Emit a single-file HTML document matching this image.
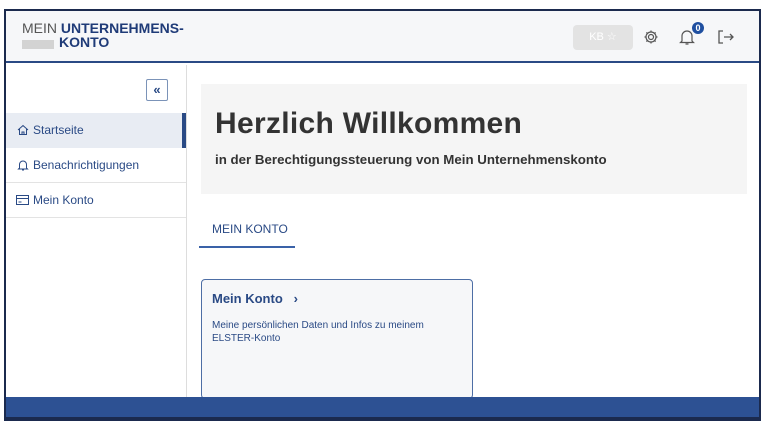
<!DOCTYPE html>
<html><head><style>
*{margin:0;padding:0;box-sizing:border-box}
body{width:764px;height:430px;background:#fff;font-family:"Liberation Sans",sans-serif;position:relative;overflow:hidden}
.a{position:absolute}
</style></head><body>
<div class="a" style="left:4px;top:9px;width:757px;height:412px;border:2px solid #1b2a4e;background:#fff"></div>
<div class="a" style="left:6px;top:11px;width:753px;height:52px;background:#f6f7f9;border-bottom:2px solid #2a4a85"></div>
<div class="a" style="left:22px;top:21px;font-size:14px;color:#555;line-height:15px">MEIN <b style="color:#1f3b78">UNTERNEHMENS-</b></div>
<div class="a" style="left:22px;top:40px;width:32px;height:9px;background:#d3d3d3"></div>
<div class="a" style="left:59px;top:35px;font-size:14px;color:#1f3b78;font-weight:bold;line-height:15px">KONTO</div>
<div class="a" style="left:573px;top:25px;width:60px;height:25px;background:#e3e3e3;border-radius:4px;color:#fff;font-size:11px;text-align:center;line-height:25px">KB ☆</div>
<svg class="a" style="left:643px;top:29px" width="16" height="16" viewBox="0 0 16 16"><circle cx="8" cy="8" r="2.5" fill="none" stroke="#555" stroke-width="1.2"/><path d="M8 1.5v2M8 12.5v2M1.5 8h2M12.5 8h2M3.4 3.4l1.4 1.4M11.2 11.2l1.4 1.4M3.4 12.6l1.4-1.4M11.2 4.8l1.4-1.4" stroke="#555" stroke-width="1.2"/><circle cx="8" cy="8" r="5" fill="none" stroke="#555" stroke-width="1.2"/></svg>
<svg class="a" style="left:679px;top:28px" width="16" height="18" viewBox="0 0 16 18"><path d="M3 13V8a5 5 0 0110 0v5l1.5 1.5h-13L3 13zM6.5 16h3" fill="none" stroke="#555" stroke-width="1.2"/></svg>
<div class="a" style="left:692px;top:22px;width:12px;height:12px;border-radius:6px;background:#1f4fa0;color:#fff;font-size:9px;font-weight:bold;text-align:center;line-height:12px">0</div>
<svg class="a" style="left:717px;top:29px" width="18" height="16" viewBox="0 0 18 16"><path d="M6 2H2v12h4M7 8h9M13 5l3 3-3 3" fill="none" stroke="#555" stroke-width="1.3"/></svg>
<div class="a" style="left:186px;top:65px;width:1px;height:332px;background:#ddd"></div>
<div class="a" style="left:146px;top:79px;width:22px;height:22px;border:1px solid #7b93b8;border-radius:2px;color:#2a4a85;font-size:13px;text-align:center;line-height:19px;font-weight:bold">«</div>
<div class="a" style="left:6px;top:113px;width:180px;height:35px;background:#e8ecf3"></div>
<div class="a" style="left:182px;top:113px;width:4px;height:35px;background:#2a4a85"></div>
<div class="a" style="left:6px;top:182px;width:180px;height:1px;background:#e3e3e3"></div>
<div class="a" style="left:6px;top:217px;width:180px;height:1px;background:#e3e3e3"></div>
<svg class="a" style="left:17px;top:124px" width="12" height="12" viewBox="0 0 12 12"><path d="M1 6L6 1.5 11 6M2.5 5v5.5h7V5M5 10.5V8h2v2.5" fill="none" stroke="#2a4a85" stroke-width="1"/></svg>
<div class="a" style="left:33px;top:123px;font-size:12px;color:#2a4a85">Startseite</div>
<svg class="a" style="left:17px;top:159px" width="12" height="12" viewBox="0 0 12 12"><path d="M2.5 9V5.5a3.5 3.5 0 017 0V9l1 1h-9zM5 11h2" fill="none" stroke="#2a4a85" stroke-width="1"/></svg>
<div class="a" style="left:33px;top:158px;font-size:12px;color:#2a4a85">Benachrichtigungen</div>
<svg class="a" style="left:16px;top:195px" width="13" height="10" viewBox="0 0 13 10"><rect x=".5" y=".5" width="12" height="9" fill="none" stroke="#2a4a85"/><path d="M.5 3.5h12M2.5 7h3" stroke="#2a4a85"/></svg>
<div class="a" style="left:33px;top:193px;font-size:12px;color:#2a4a85">Mein Konto</div>
<div class="a" style="left:201px;top:84px;width:546px;height:110px;background:#f5f5f5"></div>
<div class="a" style="left:215px;top:107px;font-size:30px;font-weight:bold;color:#333;letter-spacing:0.3px">Herzlich Willkommen</div>
<div class="a" style="left:215px;top:152px;font-size:13.3px;font-weight:bold;color:#333">in der Berechtigungssteuerung von Mein Unternehmenskonto</div>
<div class="a" style="left:212px;top:222px;font-size:12px;color:#2a4a85">MEIN KONTO</div>
<div class="a" style="left:199px;top:246px;width:96px;height:2px;background:#3a62a8"></div>
<div class="a" style="left:201px;top:279px;width:272px;height:120px;border:1px solid #4d6ea5;border-radius:4px;background:#f6f7f9"></div>
<div class="a" style="left:212px;top:291px;font-size:13px;font-weight:bold;color:#2a4a85">Mein Konto &nbsp;&nbsp;›</div>
<div class="a" style="left:212px;top:319px;font-size:10px;color:#2a4a85;line-height:13px;width:250px">Meine persönlichen Daten und Infos zu meinem ELSTER-Konto</div>
<div class="a" style="left:6px;top:397px;width:753px;height:22px;background:#2d5193;border-bottom:2px solid #1b2a4e"></div>
</body></html>
